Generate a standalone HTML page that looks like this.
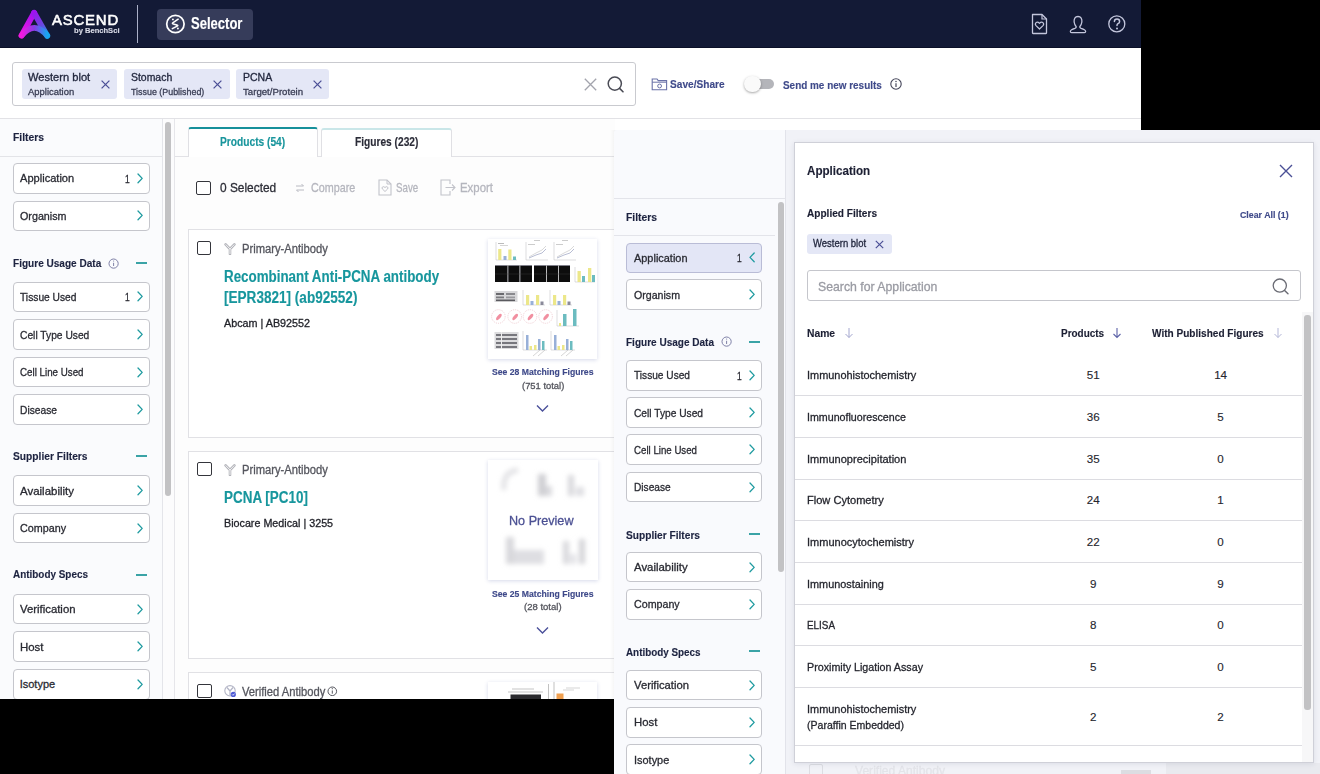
<!DOCTYPE html>
<html><head><meta charset="utf-8"><style>
html,body{margin:0;padding:0;}
body{width:1320px;height:774px;overflow:hidden;position:relative;background:#fff;font-family:"Liberation Sans", sans-serif;}
div,svg{box-sizing:border-box;}
</style></head><body>
<div style="position:absolute;left:0px;top:0px;width:1141px;height:48px;background:#131a36;border-bottom:1.5px solid #0b1028;"></div>
<svg style="position:absolute;left:14px;top:5px;" width="40" height="38" viewBox="0 0 40 38"><defs>
<linearGradient id="lgL" gradientUnits="userSpaceOnUse" x1="20" y1="7" x2="7.5" y2="31"><stop offset="0" stop-color="#a010f0"/><stop offset="1" stop-color="#f218e0"/></linearGradient>
<linearGradient id="lgR" gradientUnits="userSpaceOnUse" x1="20" y1="7" x2="33" y2="31"><stop offset="0" stop-color="#a012f0"/><stop offset="0.55" stop-color="#6a48e0"/><stop offset="1" stop-color="#16a6f0"/></linearGradient>
<linearGradient id="lgA" gradientUnits="userSpaceOnUse" x1="7.5" y1="0" x2="33" y2="0"><stop offset="0" stop-color="#f218e0"/><stop offset="0.5" stop-color="#8a3ce6"/><stop offset="1" stop-color="#16a6f0"/></linearGradient></defs>
<path d="M7.6 30.5 L20.1 7.8" fill="none" stroke="url(#lgL)" stroke-width="5.8" stroke-linecap="round"/>
<path d="M20.1 7.8 L33.2 30.7" fill="none" stroke="url(#lgR)" stroke-width="5.8" stroke-linecap="round"/>
<path d="M7.6 30.5 Q20.3 15.2 33.2 30.7" fill="none" stroke="url(#lgA)" stroke-width="5.8" stroke-linecap="round"/></svg>
<div class="t" style="position:absolute;left:52px;top:13.27px;font-size:14.8px;font-weight:400;color:#ffffff;line-height:14.8px;-webkit-text-stroke:0.3px currentColor;white-space:nowrap;transform:scaleX(1.0080);transform-origin:0 0;letter-spacing:0.8px;-webkit-text-stroke:0.55px #fff;">ASCEND</div>
<div class="t" style="position:absolute;left:73.5px;top:27.45px;font-size:7.5px;font-weight:700;color:#d8dae6;line-height:7.5px;-webkit-text-stroke:0.15px currentColor;white-space:nowrap;transform:scaleX(1.0108);transform-origin:0 0;">by BenchSci</div>
<div style="position:absolute;left:137px;top:5px;width:1.3px;height:38px;background:#aab0c8;"></div>
<div style="position:absolute;left:157px;top:8.5px;width:96px;height:31px;background:#363c5a;border-radius:4px;"></div>
<svg style="position:absolute;left:165px;top:14px;" width="21" height="20" viewBox="0 0 21 20"><circle cx="10.4" cy="9.95" r="8.7" fill="none" stroke="#fff" stroke-width="1.75"/><path d="M13.2 5.2 L8.1 8.6 Q6.6 9.6 8.3 10.0 L11.9 10.9 Q13.6 11.3 12.2 12.1 L7.3 14.6" fill="none" stroke="#fff" stroke-width="1.5" stroke-linecap="round" stroke-linejoin="round"/><circle cx="7.9" cy="5.4" r="0.95" fill="#fff"/><circle cx="12.9" cy="14.5" r="0.95" fill="#fff"/></svg>
<div class="t" style="position:absolute;left:191px;top:16.16px;font-size:16px;font-weight:700;color:#ffffff;line-height:16px;-webkit-text-stroke:0.15px currentColor;white-space:nowrap;transform:scaleX(0.8141);transform-origin:0 0;">Selector</div>
<svg style="position:absolute;left:1030px;top:13px;" width="19" height="22" viewBox="0 0 19 22"><path d="M2.5 1.5 H12 L16.5 6 V20 Q16.5 20.5 16 20.5 H3 Q2.5 20.5 2.5 20 Z" fill="none" stroke="#c3c6dc" stroke-width="1.3" stroke-linejoin="round"/><path d="M12 1.5 V6 H16.5" fill="none" stroke="#c3c6dc" stroke-width="1.2"/><path d="M9.5 16 L6 12.6 Q4.6 11 6.1 9.6 Q7.7 8.4 9.5 10.3 Q11.3 8.4 12.9 9.6 Q14.4 11 13 12.6 Z" fill="none" stroke="#c3c6dc" stroke-width="1.2" stroke-linejoin="round"/></svg>
<svg style="position:absolute;left:1067px;top:13px;" width="22" height="22" viewBox="0 0 22 22"><g transform="translate(11 11.6) scale(0.88) translate(-11 -11.2)"><path d="M11 2 C7.5 2 6.3 5 6.6 8.3 C6.9 11 8.3 12.8 9 13.6 C9.2 14.6 8.6 15.2 7.5 15.6 C4.5 16.6 2.3 17.5 2.3 19 Q2.3 20.3 3.8 20.3 H18.2 Q19.7 20.3 19.7 19 C19.7 17.5 17.5 16.6 14.5 15.6 C13.4 15.2 12.8 14.6 13 13.6 C13.7 12.8 15.1 11 15.4 8.3 C15.7 5 14.5 2 11 2 Z" fill="none" stroke="#c3c6dc" stroke-width="1.45" stroke-linejoin="round"/></g></svg>
<svg style="position:absolute;left:1106px;top:13px;" width="22" height="22" viewBox="0 0 22 22"><circle cx="10.8" cy="10.9" r="8" fill="none" stroke="#c3c6dc" stroke-width="1.3"/><path d="M8.4 8.6 Q8.4 6 11 6 Q13.6 6 13.6 8.4 Q13.6 9.8 12 10.7 Q11 11.3 11 12.6" fill="none" stroke="#c3c6dc" stroke-width="1.5" stroke-linecap="round"/><circle cx="11" cy="15.4" r="1" fill="#c3c6dc"/></svg>
<div style="position:absolute;left:1141px;top:0px;width:179px;height:130px;background:#000;"></div>
<div style="position:absolute;left:12px;top:61.5px;width:624px;height:44px;border:1px solid #c9cacf;border-radius:3px;background:#fff;"></div>
<div style="position:absolute;left:22px;top:68.7px;width:95px;height:30px;background:#e4e7f6;border-radius:3px;"></div>
<div class="t" style="position:absolute;left:28.3px;top:72.13px;font-size:10.6px;font-weight:400;color:#23283f;line-height:10.6px;-webkit-text-stroke:0.3px currentColor;white-space:nowrap;transform:scaleX(1.0492);transform-origin:0 0;">Western blot</div>
<div class="t" style="position:absolute;left:28.3px;top:86.84px;font-size:9.4px;font-weight:400;color:#3a3e55;line-height:9.4px;-webkit-text-stroke:0.3px currentColor;white-space:nowrap;transform:scaleX(1.0071);transform-origin:0 0;">Application</div>
<svg style="position:absolute;left:100.5px;top:80px;" width="9" height="9" viewBox="0 0 9 9"><path d="M0.6 0.6 L8.4 8.4 M8.4 0.6 L0.6 8.4" stroke="#4a4e96" stroke-width="1.25"/></svg>
<div style="position:absolute;left:124.2px;top:68.7px;width:105.5px;height:30px;background:#e4e7f6;border-radius:3px;"></div>
<div class="t" style="position:absolute;left:130.5px;top:72.13px;font-size:10.6px;font-weight:400;color:#23283f;line-height:10.6px;-webkit-text-stroke:0.3px currentColor;white-space:nowrap;transform:scaleX(0.9854);transform-origin:0 0;">Stomach</div>
<div class="t" style="position:absolute;left:130.5px;top:86.84px;font-size:9.4px;font-weight:400;color:#3a3e55;line-height:9.4px;-webkit-text-stroke:0.3px currentColor;white-space:nowrap;transform:scaleX(0.9483);transform-origin:0 0;">Tissue (Published)</div>
<svg style="position:absolute;left:212.5px;top:80px;" width="9" height="9" viewBox="0 0 9 9"><path d="M0.6 0.6 L8.4 8.4 M8.4 0.6 L0.6 8.4" stroke="#4a4e96" stroke-width="1.25"/></svg>
<div style="position:absolute;left:236.3px;top:68.7px;width:93px;height:30px;background:#e4e7f6;border-radius:3px;"></div>
<div class="t" style="position:absolute;left:242.60000000000002px;top:72.13px;font-size:10.6px;font-weight:400;color:#23283f;line-height:10.6px;-webkit-text-stroke:0.3px currentColor;white-space:nowrap;transform:scaleX(0.9919);transform-origin:0 0;">PCNA</div>
<div class="t" style="position:absolute;left:242.60000000000002px;top:86.84px;font-size:9.4px;font-weight:400;color:#3a3e55;line-height:9.4px;-webkit-text-stroke:0.3px currentColor;white-space:nowrap;transform:scaleX(1.0278);transform-origin:0 0;">Target/Protein</div>
<svg style="position:absolute;left:312.5px;top:80px;" width="9" height="9" viewBox="0 0 9 9"><path d="M0.6 0.6 L8.4 8.4 M8.4 0.6 L0.6 8.4" stroke="#4a4e96" stroke-width="1.25"/></svg>
<svg style="position:absolute;left:584px;top:77.5px;" width="13" height="13" viewBox="0 0 13 13"><path d="M0.8 0.8 L12.2 12.2 M12.2 0.8 L0.8 12.2" stroke="#a3a4ad" stroke-width="1.3"/></svg>
<svg style="position:absolute;left:607px;top:76px;" width="18" height="17" viewBox="0 0 18 17"><circle cx="7.8" cy="7.6" r="6.6" fill="none" stroke="#4a4b55" stroke-width="1.5"/><path d="M12.6 12.4 L16 15.8" stroke="#4a4b55" stroke-width="1.6" stroke-linecap="round"/></svg>
<svg style="position:absolute;left:651px;top:77px;" width="17" height="14" viewBox="0 0 17 14"><path d="M1.2 2 H6 L7.2 3.6 H15.6 V12.8 H1.2 Z" fill="none" stroke="#6a72a8" stroke-width="1.1"/><path d="M1.2 5.2 H15.6" stroke="#6a72a8" stroke-width="1"/><circle cx="8.6" cy="9" r="1.9" fill="none" stroke="#6a72a8" stroke-width="1"/></svg>
<div class="t" style="position:absolute;left:670.4px;top:78.48px;font-size:11.6px;font-weight:700;color:#3f4a8a;line-height:11.6px;-webkit-text-stroke:0.15px currentColor;white-space:nowrap;transform:scaleX(0.8732);transform-origin:0 0;">Save/Share</div>
<div style="position:absolute;left:747px;top:78.8px;width:27px;height:10.5px;background:#b4b5ba;border-radius:6px;"></div>
<div style="position:absolute;left:744px;top:75.8px;width:16.5px;height:16.5px;background:#fafafa;border-radius:50%;box-shadow:0 1px 2.5px rgba(0,0,0,0.35);"></div>
<div class="t" style="position:absolute;left:783px;top:78.68px;font-size:11.6px;font-weight:700;color:#3f4a8a;line-height:11.6px;-webkit-text-stroke:0.15px currentColor;white-space:nowrap;transform:scaleX(0.8566);transform-origin:0 0;">Send me new results</div>
<svg style="position:absolute;left:890px;top:78px;" width="12" height="12" viewBox="0 0 12 12"><circle cx="6" cy="6" r="5.2" fill="none" stroke="#45465a" stroke-width="1.1"/><path d="M6 5.2 V9" stroke="#45465a" stroke-width="1.2"/><circle cx="6" cy="3.4" r="0.75" fill="#45465a"/></svg>
<div style="position:absolute;left:0px;top:118px;width:1141px;height:1.2px;background:#e2e2e6;"></div>
<div style="position:absolute;left:0px;top:119px;width:162.5px;height:580px;background:#fafbfd;border-right:1px solid #e4e5ea;"></div>
<div style="position:absolute;left:162.5px;top:119px;width:11.5px;height:580px;background:#fcfcfd;"></div>
<div style="position:absolute;left:165px;top:121.5px;width:6.2px;height:374px;background:#c2c2c4;border-radius:3px;"></div>
<div style="position:absolute;left:173.5px;top:119px;width:1px;height:580px;background:#e6e6ea;"></div>
<div style="position:absolute;left:0px;top:155.6px;width:162px;height:1.2px;background:#e3e4e8;"></div>
<div class="t" style="position:absolute;left:12.6px;top:132.12px;font-size:11.2px;font-weight:700;color:#1d2340;line-height:11.2px;-webkit-text-stroke:0.15px currentColor;white-space:nowrap;transform:scaleX(0.9232);transform-origin:0 0;">Filters</div>
<div style="position:absolute;left:12.5px;top:163px;width:137px;height:30.6px;background:#ffffff;border:1px solid #c5c6cc;border-radius:4px;"></div>
<div class="t" style="position:absolute;left:19.7px;top:173.49px;font-size:11px;font-weight:400;color:#2a2b33;line-height:11px;-webkit-text-stroke:0.3px currentColor;white-space:nowrap;transform:scaleX(1.0069);transform-origin:0 0;">Application</div>
<div class="t" style="position:absolute;left:125.0px;top:173.89px;font-size:11px;font-weight:400;color:#2a2b33;line-height:11px;-webkit-text-stroke:0.3px currentColor;white-space:nowrap;transform:scaleX(0.7673);transform-origin:0 0;">1</div>
<svg style="position:absolute;left:136.70000000000002px;top:172.8px;" width="7" height="11" viewBox="0 0 7 11"><path d="M1 1 L5.2 5.4 L1 9.8" fill="none" stroke="#1f9ba0" stroke-width="1.3" stroke-linecap="round" stroke-linejoin="round"/></svg>
<div style="position:absolute;left:12.5px;top:200.6px;width:137px;height:30.6px;background:#ffffff;border:1px solid #c5c6cc;border-radius:4px;"></div>
<div class="t" style="position:absolute;left:19.7px;top:211.09px;font-size:11px;font-weight:400;color:#2a2b33;line-height:11px;-webkit-text-stroke:0.3px currentColor;white-space:nowrap;transform:scaleX(0.9751);transform-origin:0 0;">Organism</div>
<svg style="position:absolute;left:136.70000000000002px;top:210.4px;" width="7" height="11" viewBox="0 0 7 11"><path d="M1 1 L5.2 5.4 L1 9.8" fill="none" stroke="#1f9ba0" stroke-width="1.3" stroke-linecap="round" stroke-linejoin="round"/></svg>
<div class="t" style="position:absolute;left:12.7px;top:257.61px;font-size:11.8px;font-weight:700;color:#1d2340;line-height:11.8px;-webkit-text-stroke:0.15px currentColor;white-space:nowrap;transform:scaleX(0.8524);transform-origin:0 0;">Figure Usage Data</div>
<svg style="position:absolute;left:108.2px;top:257.5px;" width="11.2" height="11.2" viewBox="0 0 11.2 11.2"><circle cx="5.6" cy="5.6" r="4.6" fill="none" stroke="#7d80a6" stroke-width="1"/><path d="M5.6 4.8 V8.0" stroke="#7d80a6" stroke-width="1"/><circle cx="5.6" cy="2.9999999999999996" r="0.6" fill="#7d80a6"/></svg>
<div style="position:absolute;left:136.4px;top:262px;width:11px;height:1.6px;background:#3aa3a6;"></div>
<div style="position:absolute;left:12.5px;top:281.6px;width:137px;height:30.6px;background:#ffffff;border:1px solid #c5c6cc;border-radius:4px;"></div>
<div class="t" style="position:absolute;left:19.7px;top:292.09px;font-size:11px;font-weight:400;color:#2a2b33;line-height:11px;-webkit-text-stroke:0.3px currentColor;white-space:nowrap;transform:scaleX(0.9303);transform-origin:0 0;">Tissue Used</div>
<div class="t" style="position:absolute;left:125.0px;top:292.49px;font-size:11px;font-weight:400;color:#2a2b33;line-height:11px;-webkit-text-stroke:0.3px currentColor;white-space:nowrap;transform:scaleX(0.7673);transform-origin:0 0;">1</div>
<svg style="position:absolute;left:136.70000000000002px;top:291.40000000000003px;" width="7" height="11" viewBox="0 0 7 11"><path d="M1 1 L5.2 5.4 L1 9.8" fill="none" stroke="#1f9ba0" stroke-width="1.3" stroke-linecap="round" stroke-linejoin="round"/></svg>
<div style="position:absolute;left:12.5px;top:319.2px;width:137px;height:30.6px;background:#ffffff;border:1px solid #c5c6cc;border-radius:4px;"></div>
<div class="t" style="position:absolute;left:19.7px;top:329.69px;font-size:11px;font-weight:400;color:#2a2b33;line-height:11px;-webkit-text-stroke:0.3px currentColor;white-space:nowrap;transform:scaleX(0.9316);transform-origin:0 0;">Cell Type Used</div>
<svg style="position:absolute;left:136.70000000000002px;top:329.0px;" width="7" height="11" viewBox="0 0 7 11"><path d="M1 1 L5.2 5.4 L1 9.8" fill="none" stroke="#1f9ba0" stroke-width="1.3" stroke-linecap="round" stroke-linejoin="round"/></svg>
<div style="position:absolute;left:12.5px;top:356.8px;width:137px;height:30.6px;background:#ffffff;border:1px solid #c5c6cc;border-radius:4px;"></div>
<div class="t" style="position:absolute;left:19.7px;top:367.29px;font-size:11px;font-weight:400;color:#2a2b33;line-height:11px;-webkit-text-stroke:0.3px currentColor;white-space:nowrap;transform:scaleX(0.8875);transform-origin:0 0;">Cell Line Used</div>
<svg style="position:absolute;left:136.70000000000002px;top:366.6px;" width="7" height="11" viewBox="0 0 7 11"><path d="M1 1 L5.2 5.4 L1 9.8" fill="none" stroke="#1f9ba0" stroke-width="1.3" stroke-linecap="round" stroke-linejoin="round"/></svg>
<div style="position:absolute;left:12.5px;top:394.4px;width:137px;height:30.6px;background:#ffffff;border:1px solid #c5c6cc;border-radius:4px;"></div>
<div class="t" style="position:absolute;left:19.7px;top:404.89px;font-size:11px;font-weight:400;color:#2a2b33;line-height:11px;-webkit-text-stroke:0.3px currentColor;white-space:nowrap;transform:scaleX(0.9308);transform-origin:0 0;">Disease</div>
<svg style="position:absolute;left:136.70000000000002px;top:404.2px;" width="7" height="11" viewBox="0 0 7 11"><path d="M1 1 L5.2 5.4 L1 9.8" fill="none" stroke="#1f9ba0" stroke-width="1.3" stroke-linecap="round" stroke-linejoin="round"/></svg>
<div class="t" style="position:absolute;left:12.7px;top:450.81px;font-size:11.8px;font-weight:700;color:#1d2340;line-height:11.8px;-webkit-text-stroke:0.15px currentColor;white-space:nowrap;transform:scaleX(0.8675);transform-origin:0 0;">Supplier Filters</div>
<div style="position:absolute;left:136.4px;top:455px;width:11px;height:1.6px;background:#3aa3a6;"></div>
<div style="position:absolute;left:12.5px;top:475.3px;width:137px;height:30.6px;background:#ffffff;border:1px solid #c5c6cc;border-radius:4px;"></div>
<div class="t" style="position:absolute;left:19.7px;top:485.79px;font-size:11px;font-weight:400;color:#2a2b33;line-height:11px;-webkit-text-stroke:0.3px currentColor;white-space:nowrap;transform:scaleX(1.0428);transform-origin:0 0;">Availability</div>
<svg style="position:absolute;left:136.70000000000002px;top:485.1px;" width="7" height="11" viewBox="0 0 7 11"><path d="M1 1 L5.2 5.4 L1 9.8" fill="none" stroke="#1f9ba0" stroke-width="1.3" stroke-linecap="round" stroke-linejoin="round"/></svg>
<div style="position:absolute;left:12.5px;top:512.9px;width:137px;height:30.6px;background:#ffffff;border:1px solid #c5c6cc;border-radius:4px;"></div>
<div class="t" style="position:absolute;left:19.7px;top:523.39px;font-size:11px;font-weight:400;color:#2a2b33;line-height:11px;-webkit-text-stroke:0.3px currentColor;white-space:nowrap;transform:scaleX(0.9771);transform-origin:0 0;">Company</div>
<svg style="position:absolute;left:136.70000000000002px;top:522.6999999999999px;" width="7" height="11" viewBox="0 0 7 11"><path d="M1 1 L5.2 5.4 L1 9.8" fill="none" stroke="#1f9ba0" stroke-width="1.3" stroke-linecap="round" stroke-linejoin="round"/></svg>
<div class="t" style="position:absolute;left:12.7px;top:569.41px;font-size:11.8px;font-weight:700;color:#1d2340;line-height:11.8px;-webkit-text-stroke:0.15px currentColor;white-space:nowrap;transform:scaleX(0.8412);transform-origin:0 0;">Antibody Specs</div>
<div style="position:absolute;left:136.4px;top:574px;width:11px;height:1.6px;background:#3aa3a6;"></div>
<div style="position:absolute;left:12.5px;top:593.8px;width:137px;height:30.6px;background:#ffffff;border:1px solid #c5c6cc;border-radius:4px;"></div>
<div class="t" style="position:absolute;left:19.7px;top:604.29px;font-size:11px;font-weight:400;color:#2a2b33;line-height:11px;-webkit-text-stroke:0.3px currentColor;white-space:nowrap;transform:scaleX(1.0314);transform-origin:0 0;">Verification</div>
<svg style="position:absolute;left:136.70000000000002px;top:603.5999999999999px;" width="7" height="11" viewBox="0 0 7 11"><path d="M1 1 L5.2 5.4 L1 9.8" fill="none" stroke="#1f9ba0" stroke-width="1.3" stroke-linecap="round" stroke-linejoin="round"/></svg>
<div style="position:absolute;left:12.5px;top:631.4px;width:137px;height:30.6px;background:#ffffff;border:1px solid #c5c6cc;border-radius:4px;"></div>
<div class="t" style="position:absolute;left:19.7px;top:641.89px;font-size:11px;font-weight:400;color:#2a2b33;line-height:11px;-webkit-text-stroke:0.3px currentColor;white-space:nowrap;transform:scaleX(1.0387);transform-origin:0 0;">Host</div>
<svg style="position:absolute;left:136.70000000000002px;top:641.1999999999999px;" width="7" height="11" viewBox="0 0 7 11"><path d="M1 1 L5.2 5.4 L1 9.8" fill="none" stroke="#1f9ba0" stroke-width="1.3" stroke-linecap="round" stroke-linejoin="round"/></svg>
<div style="position:absolute;left:12.5px;top:669px;width:137px;height:30.6px;background:#ffffff;border:1px solid #c5c6cc;border-radius:4px;"></div>
<div class="t" style="position:absolute;left:19.7px;top:679.49px;font-size:11px;font-weight:400;color:#2a2b33;line-height:11px;-webkit-text-stroke:0.3px currentColor;white-space:nowrap;transform-origin:0 0;">Isotype</div>
<svg style="position:absolute;left:136.70000000000002px;top:678.8px;" width="7" height="11" viewBox="0 0 7 11"><path d="M1 1 L5.2 5.4 L1 9.8" fill="none" stroke="#1f9ba0" stroke-width="1.3" stroke-linecap="round" stroke-linejoin="round"/></svg>
<div style="position:absolute;left:174.5px;top:119px;width:440px;height:580px;background:#fdfdfd;"></div>
<div style="position:absolute;left:174.5px;top:156px;width:440px;height:1.2px;background:#e2e2e6;"></div>
<div style="position:absolute;left:187.5px;top:127px;width:130px;height:30.2px;background:#fff;border:1px solid #e0e0e4;border-bottom:none;border-top:2.6px solid #16909a;border-radius:3px 3px 0 0;"></div>
<div style="position:absolute;left:321.2px;top:127.5px;width:130.5px;height:29px;background:#fff;border:1px solid #e0e0e4;border-bottom:none;border-top:2px solid #c9e6e8;border-radius:3px 3px 0 0;"></div>
<div class="t" style="position:absolute;left:219.8px;top:136.13px;font-size:12.6px;font-weight:700;color:#19959c;line-height:12.6px;-webkit-text-stroke:0.15px currentColor;white-space:nowrap;transform:scaleX(0.8101);transform-origin:0 0;">Products (54)</div>
<div class="t" style="position:absolute;left:355px;top:136.13px;font-size:12.6px;font-weight:700;color:#2b2c38;line-height:12.6px;-webkit-text-stroke:0.15px currentColor;white-space:nowrap;transform:scaleX(0.8088);transform-origin:0 0;font-weight:600;">Figures (232)</div>
<div style="position:absolute;left:196.4px;top:181px;width:14.2px;height:14px;border:1.8px solid #34353b;border-radius:2px;background:#fff;"></div>
<div class="t" style="position:absolute;left:219.8px;top:181.36px;font-size:13.4px;font-weight:400;color:#2c2d36;line-height:13.4px;-webkit-text-stroke:0.3px currentColor;white-space:nowrap;transform:scaleX(0.8881);transform-origin:0 0;">0 Selected</div>
<svg style="position:absolute;left:294.5px;top:182.5px;" width="10" height="10" viewBox="0 0 10 10"><path d="M1 3 H8.5 M6.5 1 L8.5 3 M9 7 H1.5 M3.5 9 L1.5 7" fill="none" stroke="#b9bac2" stroke-width="1"/></svg>
<div class="t" style="position:absolute;left:310.7px;top:181.73px;font-size:12.6px;font-weight:400;color:#b5b6be;line-height:12.6px;-webkit-text-stroke:0.3px currentColor;white-space:nowrap;transform:scaleX(0.8553);transform-origin:0 0;">Compare</div>
<svg style="position:absolute;left:378px;top:179px;" width="14" height="17" viewBox="0 0 14 17"><path d="M1 1 H9 L13 5 V16 H1 Z" fill="none" stroke="#c2c3ca" stroke-width="1.1"/><path d="M9 1 V5 H13" fill="none" stroke="#c2c3ca" stroke-width="1"/><path d="M7 12.5 L4.4 10 Q3.5 8.8 4.6 7.9 Q5.8 7.2 7 8.5 Q8.2 7.2 9.4 7.9 Q10.5 8.8 9.6 10 Z" fill="none" stroke="#c2c3ca" stroke-width="1"/></svg>
<div class="t" style="position:absolute;left:396.4px;top:181.73px;font-size:12.6px;font-weight:400;color:#b5b6be;line-height:12.6px;-webkit-text-stroke:0.3px currentColor;white-space:nowrap;transform:scaleX(0.7730);transform-origin:0 0;">Save</div>
<svg style="position:absolute;left:440px;top:179px;" width="16" height="17" viewBox="0 0 16 17"><path d="M10 5 V1 H1 V16 H10 V12" fill="none" stroke="#c2c3ca" stroke-width="1.1"/><path d="M5.5 8.5 H15 M12 5.5 L15 8.5 L12 11.5" fill="none" stroke="#c2c3ca" stroke-width="1.1"/></svg>
<div class="t" style="position:absolute;left:459.5px;top:181.73px;font-size:12.6px;font-weight:400;color:#b5b6be;line-height:12.6px;-webkit-text-stroke:0.3px currentColor;white-space:nowrap;transform:scaleX(0.9064);transform-origin:0 0;">Export</div>
<div style="position:absolute;left:187.5px;top:228.6px;width:440px;height:209px;background:#fff;border:1px solid #e1e1e5;"></div>
<div style="position:absolute;left:197px;top:240.5px;width:14.2px;height:14px;border:1.8px solid #34353b;border-radius:2px;"></div>
<svg style="position:absolute;left:224px;top:242.5px;" width="12" height="12" viewBox="0 0 12 12"><path d="M6 11 V6 M6 6 L1.6 1.4 M6 6 L10.4 1.4" fill="none" stroke="#b4b5bb" stroke-width="2.6" stroke-linecap="round"/><path d="M6 10.6 V6.2 M5.8 5.8 L1.9 1.7 M6.2 5.8 L10.1 1.7" fill="none" stroke="#fff" stroke-width="0.8" stroke-linecap="round"/></svg>
<div class="t" style="position:absolute;left:241.8px;top:242.59px;font-size:12.3px;font-weight:400;color:#55565e;line-height:12.3px;-webkit-text-stroke:0.3px currentColor;white-space:nowrap;transform:scaleX(0.9108);transform-origin:0 0;">Primary-Antibody</div>
<div class="t" style="position:absolute;left:223.9px;top:268.59px;font-size:15.6px;font-weight:700;color:#17969d;line-height:15.6px;-webkit-text-stroke:0.15px currentColor;white-space:nowrap;transform:scaleX(0.8571);transform-origin:0 0;font-weight:600;">Recombinant Anti-PCNA antibody</div>
<div class="t" style="position:absolute;left:223.9px;top:289.79px;font-size:15.6px;font-weight:700;color:#17969d;line-height:15.6px;-webkit-text-stroke:0.15px currentColor;white-space:nowrap;transform:scaleX(0.8695);transform-origin:0 0;font-weight:600;">[EPR3821] (ab92552)</div>
<div class="t" style="position:absolute;left:223.9px;top:317.72px;font-size:11.2px;font-weight:400;color:#22232a;line-height:11.2px;-webkit-text-stroke:0.3px currentColor;white-space:nowrap;transform:scaleX(0.9635);transform-origin:0 0;">Abcam | AB92552</div>
<div style="position:absolute;left:488px;top:239px;width:109px;height:120px;background:#fff;box-shadow:0 0.5px 4px rgba(70,80,160,0.22);"></div>
<svg style="position:absolute;left:487.4px;top:238.4px;" width="110" height="121" viewBox="0 0 110 121"><defs><filter id="sb" x="-5%" y="-5%" width="110%" height="110%"><feGaussianBlur stdDeviation="0.4"/></filter></defs><g filter="url(#sb)"><path d="M9 4 L9 22" stroke="#b8b8bc" stroke-width="0.5"/><path d="M9 22 L30 22" stroke="#b8b8bc" stroke-width="0.5"/><rect x="11.2" y="11" width="3.2" height="11" fill="#ece78a" opacity="1"/><rect x="16.5" y="18" width="3" height="4" fill="#98b0d8" opacity="1"/><rect x="21.3" y="11.5" width="3.2" height="10.5" fill="#ece78a" opacity="1"/><rect x="26" y="18.5" width="3" height="3.5" fill="#6cbcc0" opacity="1"/><rect x="11" y="5" width="6" height="1" fill="#bbb" opacity="1"/><rect x="13" y="7" width="8" height="0.8" fill="#ccc" opacity="1"/><path d="M39 4 L39 22" stroke="#b8b8bc" stroke-width="0.5"/><path d="M39 22 L61 22" stroke="#b8b8bc" stroke-width="0.5"/><path d="M42 19 L49 15 L55 12 L59 8" stroke="#c8c8c8" stroke-width="0.7" fill="none"/><path d="M42 20 L49 17 L55 15 L59 11" stroke="#9aa0c0" stroke-width="0.7" fill="none"/><rect x="41" y="6" width="7" height="1" fill="#ccc" opacity="1"/><rect x="47" y="2" width="6" height="1" fill="#ccc" opacity="1"/><path d="M67 4 L67 22" stroke="#b8b8bc" stroke-width="0.5"/><path d="M67 22 L89 22" stroke="#b8b8bc" stroke-width="0.5"/><path d="M70 19 L77 15 L83 12 L87 8" stroke="#c8c8c8" stroke-width="0.7" fill="none"/><path d="M70 20 L77 17 L83 15 L87 11" stroke="#9aa0c0" stroke-width="0.7" fill="none"/><rect x="69" y="6" width="7" height="1" fill="#ccc" opacity="1"/><rect x="75" y="2" width="6" height="1" fill="#ccc" opacity="1"/><rect x="8" y="27.5" width="37" height="16.5" fill="#0c0c10" opacity="1"/><rect x="47" y="27.5" width="36" height="16.5" fill="#0c0c10" opacity="1"/><rect x="20.5" y="27.5" width="0.8" height="16.5" fill="#e8e8e8" opacity="1"/><rect x="32.5" y="27.5" width="0.8" height="16.5" fill="#e8e8e8" opacity="1"/><rect x="59" y="27.5" width="0.8" height="16.5" fill="#e8e8e8" opacity="1"/><rect x="71" y="27.5" width="0.8" height="16.5" fill="#e8e8e8" opacity="1"/><path d="M8 36 L45 36" stroke="#444" stroke-width="0.4"/><path d="M47 36 L83 36" stroke="#444" stroke-width="0.4"/><path d="M88 29 L88 44" stroke="#b8b8bc" stroke-width="0.5"/><path d="M88 44 L108 44" stroke="#b8b8bc" stroke-width="0.5"/><rect x="90.5" y="33" width="3.3" height="11" fill="#ece78a" opacity="1"/><rect x="95" y="38" width="3" height="6" fill="#6cbcc0" opacity="1"/><rect x="101" y="30" width="3.3" height="14" fill="#ece78a" opacity="1"/><rect x="105" y="37" width="3" height="7" fill="#6cbcc0" opacity="1"/><rect x="7.5" y="53" width="23" height="11" fill="#d8d8da" opacity="1"/><rect x="9" y="55" width="8" height="2" fill="#6a6a6e" opacity="1"/><rect x="19" y="55" width="9" height="2" fill="#8a8a8e" opacity="1"/><rect x="9" y="58.5" width="8" height="1.8" fill="#7a7a7e" opacity="1"/><rect x="19" y="58.5" width="9" height="1.8" fill="#9a9a9e" opacity="1"/><rect x="9" y="61.5" width="19" height="1.6" fill="#5a5a5e" opacity="1"/><path d="M36 52 L36 67" stroke="#b8b8bc" stroke-width="0.5"/><path d="M36 67 L58 67" stroke="#b8b8bc" stroke-width="0.5"/><rect x="39" y="57" width="3.2" height="10" fill="#ece78a" opacity="1"/><rect x="43.5" y="63" width="3" height="4" fill="#98b0d8" opacity="1"/><rect x="49" y="57" width="3.2" height="10" fill="#ece78a" opacity="1"/><rect x="53.5" y="63.5" width="3" height="3.5" fill="#8a8a9a" opacity="1"/><path d="M63 52 L63 67" stroke="#b8b8bc" stroke-width="0.5"/><path d="M63 67 L85 67" stroke="#b8b8bc" stroke-width="0.5"/><rect x="66" y="57" width="3.2" height="10" fill="#ece78a" opacity="1"/><rect x="70.5" y="63" width="3" height="4" fill="#98b0d8" opacity="1"/><rect x="76" y="57" width="3.2" height="10" fill="#ece78a" opacity="1"/><rect x="80.5" y="63.5" width="3" height="3.5" fill="#8a8a9a" opacity="1"/><circle cx="11.4" cy="78.5" r="6.8" fill="none" stroke="#e6b0b8" stroke-width="0.6" stroke-dasharray="1 1"/><ellipse cx="11.9" cy="79" rx="1.7" ry="3.8" transform="rotate(40 11.9 79)" fill="#ec6a80" opacity="0.75"/><circle cx="27.7" cy="78.5" r="6.8" fill="none" stroke="#e6b0b8" stroke-width="0.6" stroke-dasharray="1 1"/><ellipse cx="28.2" cy="79" rx="1.7" ry="3.8" transform="rotate(40 28.2 79)" fill="#ec6a80" opacity="0.75"/><circle cx="43" cy="78.5" r="6.8" fill="none" stroke="#e6b0b8" stroke-width="0.6" stroke-dasharray="1 1"/><ellipse cx="43.5" cy="79" rx="1.7" ry="3.8" transform="rotate(40 43.5 79)" fill="#ec6a80" opacity="0.75"/><circle cx="58.6" cy="78.5" r="6.8" fill="none" stroke="#e6b0b8" stroke-width="0.6" stroke-dasharray="1 1"/><ellipse cx="59.1" cy="79" rx="1.7" ry="3.8" transform="rotate(40 59.1 79)" fill="#ec6a80" opacity="0.75"/><path d="M70 72 L70 88" stroke="#b8b8bc" stroke-width="0.5"/><path d="M70 88 L92 88" stroke="#b8b8bc" stroke-width="0.5"/><rect x="72" y="85" width="2" height="3" fill="#ece78a" opacity="1"/><rect x="76" y="76" width="3.5" height="12" fill="#6cbcc0" opacity="1"/><rect x="86" y="71" width="3.5" height="17" fill="#6cbcc0" opacity="1"/><rect x="7.5" y="94" width="24" height="17" fill="#dcdcde" opacity="1"/><rect x="9" y="96" width="21" height="2" fill="#77777d" opacity="1"/><rect x="9" y="100" width="21" height="2" fill="#77777d" opacity="1"/><rect x="9" y="104" width="21" height="2" fill="#77777d" opacity="1"/><rect x="9" y="108" width="21" height="2" fill="#77777d" opacity="1"/><rect x="14" y="94" width="1" height="17" fill="#eee" opacity="1"/><path d="M36 93 L36 112" stroke="#b8b8bc" stroke-width="0.5"/><path d="M36 112 L60 112" stroke="#b8b8bc" stroke-width="0.5"/><rect x="39" y="97" width="2.5" height="15" fill="#98b0d8" opacity="1"/><rect x="42.5" y="108" width="2.5" height="4" fill="#ece78a" opacity="1"/><rect x="47" y="107" width="2.5" height="5" fill="#ece78a" opacity="1"/><rect x="51" y="101" width="2.5" height="11" fill="#98b0d8" opacity="1"/><rect x="55" y="103" width="2.5" height="9" fill="#6cbcc0" opacity="1"/><path d="M46 118 L53 112 M51 118 L58 112" stroke="#aaa" stroke-width="0.5"/><path d="M64 93 L64 112" stroke="#b8b8bc" stroke-width="0.5"/><path d="M64 112 L88 112" stroke="#b8b8bc" stroke-width="0.5"/><rect x="67" y="97" width="2.5" height="15" fill="#98b0d8" opacity="1"/><rect x="70.5" y="108" width="2.5" height="4" fill="#ece78a" opacity="1"/><rect x="75" y="107" width="2.5" height="5" fill="#ece78a" opacity="1"/><rect x="79" y="101" width="2.5" height="11" fill="#98b0d8" opacity="1"/><rect x="83" y="103" width="2.5" height="9" fill="#6cbcc0" opacity="1"/><path d="M74 118 L81 112 M79 118 L86 112" stroke="#aaa" stroke-width="0.5"/></g></svg>
<div class="t" style="position:absolute;left:492px;top:367.29px;font-size:9.7px;font-weight:700;color:#3f4a8a;line-height:9.7px;-webkit-text-stroke:0.15px currentColor;white-space:nowrap;transform:scaleX(0.8935);transform-origin:0 0;">See 28 Matching Figures</div>
<div class="t" style="position:absolute;left:521.7px;top:380.59px;font-size:9.7px;font-weight:400;color:#55565e;line-height:9.7px;-webkit-text-stroke:0.3px currentColor;white-space:nowrap;transform:scaleX(0.9696);transform-origin:0 0;">(751 total)</div>
<svg style="position:absolute;left:536px;top:404px;" width="13" height="9" viewBox="0 0 13 9"><path d="M1 1.5 L6.5 7 L12 1.5" fill="none" stroke="#4a509a" stroke-width="1.4"/></svg>
<div style="position:absolute;left:187.5px;top:450.5px;width:440px;height:208px;background:#fff;border:1px solid #e1e1e5;"></div>
<div style="position:absolute;left:197.4px;top:462px;width:14.2px;height:14px;border:1.8px solid #34353b;border-radius:2px;"></div>
<svg style="position:absolute;left:224px;top:464px;" width="12" height="12" viewBox="0 0 12 12"><path d="M6 11 V6 M6 6 L1.6 1.4 M6 6 L10.4 1.4" fill="none" stroke="#b4b5bb" stroke-width="2.6" stroke-linecap="round"/><path d="M6 10.6 V6.2 M5.8 5.8 L1.9 1.7 M6.2 5.8 L10.1 1.7" fill="none" stroke="#fff" stroke-width="0.8" stroke-linecap="round"/></svg>
<div class="t" style="position:absolute;left:241.6px;top:464.09px;font-size:12.3px;font-weight:400;color:#55565e;line-height:12.3px;-webkit-text-stroke:0.3px currentColor;white-space:nowrap;transform:scaleX(0.9108);transform-origin:0 0;">Primary-Antibody</div>
<div class="t" style="position:absolute;left:223.7px;top:489.99px;font-size:15.6px;font-weight:700;color:#17969d;line-height:15.6px;-webkit-text-stroke:0.15px currentColor;white-space:nowrap;transform:scaleX(0.8619);transform-origin:0 0;font-weight:600;">PCNA [PC10]</div>
<div class="t" style="position:absolute;left:223.7px;top:517.82px;font-size:11.2px;font-weight:400;color:#22232a;line-height:11.2px;-webkit-text-stroke:0.3px currentColor;white-space:nowrap;transform:scaleX(0.9603);transform-origin:0 0;">Biocare Medical | 3255</div>
<div style="position:absolute;left:487.5px;top:460.2px;width:110px;height:120.2px;background:#fff;box-shadow:0 0.5px 4px rgba(70,80,160,0.22);"></div>
<svg style="position:absolute;left:487.5px;top:460.2px;" width="110" height="120" viewBox="0 0 110 120"><defs><filter id="bl" x="-50%" y="-50%" width="200%" height="200%"><feGaussianBlur stdDeviation="2.8"/></filter></defs>
<g filter="url(#bl)">
<path d="M16 30 Q14 12 30 10" stroke="#e2e2e5" stroke-width="5" fill="none"/>
<rect x="50" y="14" width="8" height="22" fill="#cfcfd3"/><rect x="58" y="26" width="6" height="10" fill="#dadade"/>
<rect x="80" y="15" width="6" height="21" fill="#d8d8dc"/><rect x="88" y="27" width="8" height="9" fill="#dedee2"/>
<rect x="18" y="77" width="8" height="27" fill="#d8d8dc"/><rect x="26" y="90" width="30" height="14" fill="#dedee2"/>
<rect x="75" y="81" width="6" height="23" fill="#d8d8dc"/><rect x="91" y="79" width="6" height="25" fill="#d4d4d8"/><rect x="82" y="94" width="6" height="10" fill="#e2e2e6"/>
</g></svg>
<div class="t" style="position:absolute;left:508.5px;top:514.19px;font-size:13.6px;font-weight:400;color:#4b5093;line-height:13.6px;-webkit-text-stroke:0.3px currentColor;white-space:nowrap;transform:scaleX(0.9278);transform-origin:0 0;">No Preview</div>
<div class="t" style="position:absolute;left:491.7px;top:588.99px;font-size:9.7px;font-weight:700;color:#3f4a8a;line-height:9.7px;-webkit-text-stroke:0.15px currentColor;white-space:nowrap;transform:scaleX(0.8935);transform-origin:0 0;">See 25 Matching Figures</div>
<div class="t" style="position:absolute;left:523.9px;top:602.39px;font-size:9.7px;font-weight:400;color:#55565e;line-height:9.7px;-webkit-text-stroke:0.3px currentColor;white-space:nowrap;transform:scaleX(0.9834);transform-origin:0 0;">(28 total)</div>
<svg style="position:absolute;left:536px;top:625.5px;" width="13" height="9" viewBox="0 0 13 9"><path d="M1 1.5 L6.5 7 L12 1.5" fill="none" stroke="#4a509a" stroke-width="1.4"/></svg>
<div style="position:absolute;left:187.5px;top:671.8px;width:440px;height:100px;background:#fff;border:1px solid #e1e1e5;"></div>
<div style="position:absolute;left:197.4px;top:683.5px;width:14.2px;height:14px;border:1.8px solid #34353b;border-radius:2px;"></div>
<svg style="position:absolute;left:223.5px;top:685px;" width="13" height="13" viewBox="0 0 13 13"><circle cx="6" cy="5.8" r="5.2" fill="none" stroke="#b3b5c6" stroke-width="1.1"/><path d="M6 10.5 V6 M6 6 L3 2.5 M6 6 L9 2.5" fill="none" stroke="#b3b5c6" stroke-width="1.2"/><circle cx="9.3" cy="9.4" r="2.6" fill="#4f5bd5"/><path d="M8.1 9.4 L9 10.3 L10.6 8.6" fill="none" stroke="#fff" stroke-width="0.8"/></svg>
<div class="t" style="position:absolute;left:241.9px;top:685.79px;font-size:12.3px;font-weight:400;color:#55565e;line-height:12.3px;-webkit-text-stroke:0.3px currentColor;white-space:nowrap;transform:scaleX(0.9093);transform-origin:0 0;">Verified Antibody</div>
<svg style="position:absolute;left:327.09999999999997px;top:685.7px;" width="10.6" height="10.6" viewBox="0 0 10.6 10.6"><circle cx="5.3" cy="5.3" r="4.3" fill="none" stroke="#55565e" stroke-width="1"/><path d="M5.3 4.5 V7.699999999999999" stroke="#55565e" stroke-width="1"/><circle cx="5.3" cy="2.6999999999999997" r="0.6" fill="#55565e"/></svg>
<div style="position:absolute;left:488.2px;top:682px;width:108.6px;height:40px;background:#fff;box-shadow:0 0.5px 4px rgba(70,80,160,0.22);"></div>
<svg style="position:absolute;left:488.2px;top:682px;" width="109" height="17" viewBox="0 0 109 17"><rect x="22.5" y="12.5" width="30.5" height="6" fill="#2a2a2e"/><path d="M20 10 H55 M24 7 H46" stroke="#888" stroke-width="0.5"/><rect x="68.5" y="11.5" width="7" height="6" fill="#f0a050"/><path d="M60.5 2 V17 M66 0 V17" stroke="#999" stroke-width="0.6"/><path d="M78 6 H92 M75 8 H86" stroke="#aaa" stroke-width="0.5"/></svg>
<div style="position:absolute;left:0px;top:699px;width:614px;height:75px;background:#000;"></div>
<div style="position:absolute;left:610px;top:130px;width:6px;height:644px;background:linear-gradient(to right,rgba(0,0,0,0),rgba(0,0,0,0.05));"></div>
<div style="position:absolute;left:614px;top:130px;width:706px;height:644px;background:#f1f2f7;border-top-left-radius:3px;"></div>
<div style="position:absolute;left:1166px;top:763px;width:154px;height:11px;background:#e9eaef;"></div>
<div style="position:absolute;left:809.4px;top:764px;width:13.3px;height:12px;border:1.2px solid #dcdde2;border-radius:2px;"></div>
<div class="t" style="position:absolute;left:855.4px;top:764.59px;font-size:12.3px;font-weight:400;color:#e3e4e9;line-height:12.3px;-webkit-text-stroke:0.3px currentColor;white-space:nowrap;transform:scaleX(0.9824);transform-origin:0 0;">Verified Antibody</div>
<div style="position:absolute;left:1120.6px;top:769.5px;width:30.5px;height:5px;background:#dcdde2;"></div>
<div style="position:absolute;left:614px;top:130px;width:172px;height:644px;background:#f9fafd;border-right:1px solid #e2e3ea;border-top-left-radius:3px;"></div>
<div style="position:absolute;left:614px;top:198.2px;width:172px;height:1.2px;background:#e3e4ea;"></div>
<div style="position:absolute;left:614px;top:235px;width:161px;height:1.2px;background:#e3e4ea;"></div>
<div style="position:absolute;left:777.8px;top:201.8px;width:6.4px;height:370px;background:#c2c2c4;border-radius:3px;"></div>
<div class="t" style="position:absolute;left:626.3px;top:212.02px;font-size:11.2px;font-weight:700;color:#1d2340;line-height:11.2px;-webkit-text-stroke:0.15px currentColor;white-space:nowrap;transform:scaleX(0.9232);transform-origin:0 0;">Filters</div>
<div style="position:absolute;left:626.3px;top:242.5px;width:135.6px;height:30.6px;background:#e3e6f6;border:1px solid #b9bcd6;border-radius:4px;"></div>
<div class="t" style="position:absolute;left:633.5px;top:252.99px;font-size:11px;font-weight:400;color:#2a2b33;line-height:11px;-webkit-text-stroke:0.3px currentColor;white-space:nowrap;transform:scaleX(0.9939);transform-origin:0 0;">Application</div>
<div class="t" style="position:absolute;left:737.4px;top:253.39px;font-size:11px;font-weight:400;color:#2a2b33;line-height:11px;-webkit-text-stroke:0.3px currentColor;white-space:nowrap;transform:scaleX(0.7673);transform-origin:0 0;">1</div>
<svg style="position:absolute;left:749.0999999999999px;top:252.3px;" width="7" height="11" viewBox="0 0 7 11"><path d="M5.2 1 L1 5.4 L5.2 9.8" fill="none" stroke="#1f9ba0" stroke-width="1.3" stroke-linecap="round" stroke-linejoin="round"/></svg>
<div style="position:absolute;left:626.3px;top:279.4px;width:135.6px;height:30.6px;background:#ffffff;border:1px solid #c5c6cc;border-radius:4px;"></div>
<div class="t" style="position:absolute;left:633.5px;top:289.89px;font-size:11px;font-weight:400;color:#2a2b33;line-height:11px;-webkit-text-stroke:0.3px currentColor;white-space:nowrap;transform:scaleX(0.9646);transform-origin:0 0;">Organism</div>
<svg style="position:absolute;left:749.0999999999999px;top:289.2px;" width="7" height="11" viewBox="0 0 7 11"><path d="M1 1 L5.2 5.4 L1 9.8" fill="none" stroke="#1f9ba0" stroke-width="1.3" stroke-linecap="round" stroke-linejoin="round"/></svg>
<div class="t" style="position:absolute;left:626.3px;top:336.18px;font-size:11.6px;font-weight:700;color:#1d2340;line-height:11.6px;-webkit-text-stroke:0.15px currentColor;white-space:nowrap;transform:scaleX(0.8645);transform-origin:0 0;">Figure Usage Data</div>
<svg style="position:absolute;left:721.3px;top:335.59999999999997px;" width="11.2" height="11.2" viewBox="0 0 11.2 11.2"><circle cx="5.6" cy="5.6" r="4.6" fill="none" stroke="#7d80a6" stroke-width="1"/><path d="M5.6 4.8 V8.0" stroke="#7d80a6" stroke-width="1"/><circle cx="5.6" cy="2.9999999999999996" r="0.6" fill="#7d80a6"/></svg>
<div style="position:absolute;left:748.8px;top:341px;width:11px;height:1.6px;background:#3aa3a6;"></div>
<div style="position:absolute;left:626.3px;top:360px;width:135.6px;height:30.6px;background:#ffffff;border:1px solid #c5c6cc;border-radius:4px;"></div>
<div class="t" style="position:absolute;left:633.5px;top:370.49px;font-size:11px;font-weight:400;color:#2a2b33;line-height:11px;-webkit-text-stroke:0.3px currentColor;white-space:nowrap;transform:scaleX(0.9220);transform-origin:0 0;">Tissue Used</div>
<div class="t" style="position:absolute;left:737.4px;top:370.89px;font-size:11px;font-weight:400;color:#2a2b33;line-height:11px;-webkit-text-stroke:0.3px currentColor;white-space:nowrap;transform:scaleX(0.7673);transform-origin:0 0;">1</div>
<svg style="position:absolute;left:749.0999999999999px;top:369.8px;" width="7" height="11" viewBox="0 0 7 11"><path d="M1 1 L5.2 5.4 L1 9.8" fill="none" stroke="#1f9ba0" stroke-width="1.3" stroke-linecap="round" stroke-linejoin="round"/></svg>
<div style="position:absolute;left:626.3px;top:397.2px;width:135.6px;height:30.6px;background:#ffffff;border:1px solid #c5c6cc;border-radius:4px;"></div>
<div class="t" style="position:absolute;left:633.5px;top:407.69px;font-size:11px;font-weight:400;color:#2a2b33;line-height:11px;-webkit-text-stroke:0.3px currentColor;white-space:nowrap;transform:scaleX(0.9275);transform-origin:0 0;">Cell Type Used</div>
<svg style="position:absolute;left:749.0999999999999px;top:407.0px;" width="7" height="11" viewBox="0 0 7 11"><path d="M1 1 L5.2 5.4 L1 9.8" fill="none" stroke="#1f9ba0" stroke-width="1.3" stroke-linecap="round" stroke-linejoin="round"/></svg>
<div style="position:absolute;left:626.3px;top:434.4px;width:135.6px;height:30.6px;background:#ffffff;border:1px solid #c5c6cc;border-radius:4px;"></div>
<div class="t" style="position:absolute;left:633.5px;top:444.89px;font-size:11px;font-weight:400;color:#2a2b33;line-height:11px;-webkit-text-stroke:0.3px currentColor;white-space:nowrap;transform:scaleX(0.8805);transform-origin:0 0;">Cell Line Used</div>
<svg style="position:absolute;left:749.0999999999999px;top:444.2px;" width="7" height="11" viewBox="0 0 7 11"><path d="M1 1 L5.2 5.4 L1 9.8" fill="none" stroke="#1f9ba0" stroke-width="1.3" stroke-linecap="round" stroke-linejoin="round"/></svg>
<div style="position:absolute;left:626.3px;top:471.7px;width:135.6px;height:30.6px;background:#ffffff;border:1px solid #c5c6cc;border-radius:4px;"></div>
<div class="t" style="position:absolute;left:633.5px;top:482.19px;font-size:11px;font-weight:400;color:#2a2b33;line-height:11px;-webkit-text-stroke:0.3px currentColor;white-space:nowrap;transform:scaleX(0.9233);transform-origin:0 0;">Disease</div>
<svg style="position:absolute;left:749.0999999999999px;top:481.5px;" width="7" height="11" viewBox="0 0 7 11"><path d="M1 1 L5.2 5.4 L1 9.8" fill="none" stroke="#1f9ba0" stroke-width="1.3" stroke-linecap="round" stroke-linejoin="round"/></svg>
<div class="t" style="position:absolute;left:626.3px;top:528.88px;font-size:11.6px;font-weight:700;color:#1d2340;line-height:11.6px;-webkit-text-stroke:0.15px currentColor;white-space:nowrap;transform:scaleX(0.8767);transform-origin:0 0;">Supplier Filters</div>
<div style="position:absolute;left:748.8px;top:533px;width:11px;height:1.6px;background:#3aa3a6;"></div>
<div style="position:absolute;left:626.3px;top:551.8px;width:135.6px;height:30.6px;background:#ffffff;border:1px solid #c5c6cc;border-radius:4px;"></div>
<div class="t" style="position:absolute;left:633.5px;top:562.29px;font-size:11px;font-weight:400;color:#2a2b33;line-height:11px;-webkit-text-stroke:0.3px currentColor;white-space:nowrap;transform:scaleX(1.0371);transform-origin:0 0;">Availability</div>
<svg style="position:absolute;left:749.0999999999999px;top:561.5999999999999px;" width="7" height="11" viewBox="0 0 7 11"><path d="M1 1 L5.2 5.4 L1 9.8" fill="none" stroke="#1f9ba0" stroke-width="1.3" stroke-linecap="round" stroke-linejoin="round"/></svg>
<div style="position:absolute;left:626.3px;top:589px;width:135.6px;height:30.6px;background:#ffffff;border:1px solid #c5c6cc;border-radius:4px;"></div>
<div class="t" style="position:absolute;left:633.5px;top:599.49px;font-size:11px;font-weight:400;color:#2a2b33;line-height:11px;-webkit-text-stroke:0.3px currentColor;white-space:nowrap;transform:scaleX(0.9707);transform-origin:0 0;">Company</div>
<svg style="position:absolute;left:749.0999999999999px;top:598.8px;" width="7" height="11" viewBox="0 0 7 11"><path d="M1 1 L5.2 5.4 L1 9.8" fill="none" stroke="#1f9ba0" stroke-width="1.3" stroke-linecap="round" stroke-linejoin="round"/></svg>
<div class="t" style="position:absolute;left:626.3px;top:645.98px;font-size:11.6px;font-weight:700;color:#1d2340;line-height:11.6px;-webkit-text-stroke:0.15px currentColor;white-space:nowrap;transform:scaleX(0.8502);transform-origin:0 0;">Antibody Specs</div>
<div style="position:absolute;left:748.8px;top:650px;width:11px;height:1.6px;background:#3aa3a6;"></div>
<div style="position:absolute;left:626.3px;top:669.7px;width:135.6px;height:30.6px;background:#ffffff;border:1px solid #c5c6cc;border-radius:4px;"></div>
<div class="t" style="position:absolute;left:633.5px;top:680.19px;font-size:11px;font-weight:400;color:#2a2b33;line-height:11px;-webkit-text-stroke:0.3px currentColor;white-space:nowrap;transform:scaleX(1.0221);transform-origin:0 0;">Verification</div>
<svg style="position:absolute;left:749.0999999999999px;top:679.5px;" width="7" height="11" viewBox="0 0 7 11"><path d="M1 1 L5.2 5.4 L1 9.8" fill="none" stroke="#1f9ba0" stroke-width="1.3" stroke-linecap="round" stroke-linejoin="round"/></svg>
<div style="position:absolute;left:626.3px;top:707px;width:135.6px;height:30.6px;background:#ffffff;border:1px solid #c5c6cc;border-radius:4px;"></div>
<div class="t" style="position:absolute;left:633.5px;top:717.49px;font-size:11px;font-weight:400;color:#2a2b33;line-height:11px;-webkit-text-stroke:0.3px currentColor;white-space:nowrap;transform:scaleX(1.0298);transform-origin:0 0;">Host</div>
<svg style="position:absolute;left:749.0999999999999px;top:716.8px;" width="7" height="11" viewBox="0 0 7 11"><path d="M1 1 L5.2 5.4 L1 9.8" fill="none" stroke="#1f9ba0" stroke-width="1.3" stroke-linecap="round" stroke-linejoin="round"/></svg>
<div style="position:absolute;left:626.3px;top:744.3px;width:135.6px;height:30.6px;background:#ffffff;border:1px solid #c5c6cc;border-radius:4px;"></div>
<div class="t" style="position:absolute;left:633.5px;top:754.79px;font-size:11px;font-weight:400;color:#2a2b33;line-height:11px;-webkit-text-stroke:0.3px currentColor;white-space:nowrap;transform:scaleX(0.9952);transform-origin:0 0;">Isotype</div>
<svg style="position:absolute;left:749.0999999999999px;top:754.0999999999999px;" width="7" height="11" viewBox="0 0 7 11"><path d="M1 1 L5.2 5.4 L1 9.8" fill="none" stroke="#1f9ba0" stroke-width="1.3" stroke-linecap="round" stroke-linejoin="round"/></svg>
<div style="position:absolute;left:793.5px;top:142.3px;width:520.5px;height:620.5px;background:#fff;border:1px solid #cfd0d8;box-shadow:0 1px 5px rgba(40,45,90,0.10);"></div>
<div class="t" style="position:absolute;left:807px;top:163.86px;font-size:13.4px;font-weight:700;color:#1c1f33;line-height:13.4px;-webkit-text-stroke:0.15px currentColor;white-space:nowrap;transform:scaleX(0.8669);transform-origin:0 0;">Application</div>
<svg style="position:absolute;left:1278.5px;top:163.5px;" width="14" height="14" viewBox="0 0 14 14"><path d="M1 1 L13 13 M13 1 L1 13" stroke="#4a4f95" stroke-width="1.4"/></svg>
<div class="t" style="position:absolute;left:807px;top:206.98px;font-size:11.6px;font-weight:700;color:#1c1f33;line-height:11.6px;-webkit-text-stroke:0.15px currentColor;white-space:nowrap;transform:scaleX(0.8692);transform-origin:0 0;">Applied Filters</div>
<div class="t" style="position:absolute;left:1239.7px;top:210.00px;font-size:9.8px;font-weight:700;color:#3f4a8a;line-height:9.8px;-webkit-text-stroke:0.15px currentColor;white-space:nowrap;transform:scaleX(0.8984);transform-origin:0 0;">Clear All (1)</div>
<div style="position:absolute;left:807px;top:234px;width:85.2px;height:19.7px;background:#e4e7f6;border-radius:3px;"></div>
<div class="t" style="position:absolute;left:812.6px;top:238.67px;font-size:10.2px;font-weight:400;color:#23283f;line-height:10.2px;-webkit-text-stroke:0.3px currentColor;white-space:nowrap;transform:scaleX(0.9313);transform-origin:0 0;">Western blot</div>
<svg style="position:absolute;left:875px;top:239.5px;" width="9" height="9" viewBox="0 0 9 9"><path d="M0.8 0.8 L8.2 8.2 M8.2 0.8 L0.8 8.2" stroke="#4a4e96" stroke-width="1.2"/></svg>
<div style="position:absolute;left:807px;top:269.6px;width:494px;height:31.2px;border:1px solid #c5c6cc;border-radius:3px;background:#fff;"></div>
<div class="t" style="position:absolute;left:817.6px;top:280.00px;font-size:13px;font-weight:400;color:#9a9ba3;line-height:13px;-webkit-text-stroke:0.3px currentColor;white-space:nowrap;transform:scaleX(0.9441);transform-origin:0 0;">Search for Application</div>
<svg style="position:absolute;left:1272px;top:277.5px;" width="18" height="17" viewBox="0 0 18 17"><circle cx="7.8" cy="7.6" r="6.6" fill="none" stroke="#6a6b74" stroke-width="1.3"/><path d="M12.6 12.4 L16 15.8" stroke="#6a6b74" stroke-width="1.4" stroke-linecap="round"/></svg>
<div style="position:absolute;left:1302px;top:312px;width:11px;height:450px;background:#f7f7f8;"></div>
<div style="position:absolute;left:1304.4px;top:315px;width:6.4px;height:395px;background:#c2c2c4;border-radius:3px;"></div>
<div class="t" style="position:absolute;left:806.9px;top:327.91px;font-size:11.8px;font-weight:700;color:#1c1f33;line-height:11.8px;-webkit-text-stroke:0.15px currentColor;white-space:nowrap;transform:scaleX(0.8743);transform-origin:0 0;">Name</div>
<svg style="position:absolute;left:843.5px;top:327px;" width="10" height="12" viewBox="0 0 10 12"><path d="M5 1 V10.5 M1.5 7 L5 10.5 L8.5 7" fill="none" stroke="#a4a7cf" stroke-width="1"/></svg>
<div class="t" style="position:absolute;left:1060.5px;top:327.81px;font-size:11.8px;font-weight:700;color:#1c1f33;line-height:11.8px;-webkit-text-stroke:0.15px currentColor;white-space:nowrap;transform:scaleX(0.8428);transform-origin:0 0;">Products</div>
<svg style="position:absolute;left:1112px;top:327px;" width="10" height="12" viewBox="0 0 10 12"><path d="M5 1 V10.5 M1.5 7 L5 10.5 L8.5 7" fill="none" stroke="#5d63a8" stroke-width="1.1"/></svg>
<div class="t" style="position:absolute;left:1152.2px;top:327.81px;font-size:11.8px;font-weight:700;color:#1c1f33;line-height:11.8px;-webkit-text-stroke:0.15px currentColor;white-space:nowrap;transform:scaleX(0.8528);transform-origin:0 0;">With Published Figures</div>
<svg style="position:absolute;left:1273px;top:327px;" width="10" height="12" viewBox="0 0 10 12"><path d="M5 1 V10.5 M1.5 7 L5 10.5 L8.5 7" fill="none" stroke="#b4b7d8" stroke-width="1"/></svg>
<div class="t" style="position:absolute;left:807px;top:369.38px;font-size:11.6px;font-weight:400;color:#25262e;line-height:11.6px;-webkit-text-stroke:0.3px currentColor;white-space:nowrap;transform:scaleX(0.9424);transform-origin:0 0;">Immunohistochemistry</div>
<div class="n" style="position:absolute;left:893.2px;width:400px;text-align:center;top:369.38px;font-size:11.6px;font-weight:400;color:#25262e;line-height:11.6px;-webkit-text-stroke:0.12px currentColor;white-space:nowrap;">51</div>
<div class="n" style="position:absolute;left:1020.5999999999999px;width:400px;text-align:center;top:369.38px;font-size:11.6px;font-weight:400;color:#25262e;line-height:11.6px;-webkit-text-stroke:0.12px currentColor;white-space:nowrap;">14</div>
<div style="position:absolute;left:794.5px;top:395px;width:507.5px;height:1px;background:#dcdce1;"></div>
<div class="t" style="position:absolute;left:807px;top:411.03px;font-size:11.6px;font-weight:400;color:#25262e;line-height:11.6px;-webkit-text-stroke:0.3px currentColor;white-space:nowrap;transform:scaleX(0.9199);transform-origin:0 0;">Immunofluorescence</div>
<div class="n" style="position:absolute;left:893.2px;width:400px;text-align:center;top:411.03px;font-size:11.6px;font-weight:400;color:#25262e;line-height:11.6px;-webkit-text-stroke:0.12px currentColor;white-space:nowrap;">36</div>
<div class="n" style="position:absolute;left:1020.5999999999999px;width:400px;text-align:center;top:411.03px;font-size:11.6px;font-weight:400;color:#25262e;line-height:11.6px;-webkit-text-stroke:0.12px currentColor;white-space:nowrap;">5</div>
<div style="position:absolute;left:794.5px;top:437px;width:507.5px;height:1px;background:#dcdce1;"></div>
<div class="t" style="position:absolute;left:807px;top:452.68px;font-size:11.6px;font-weight:400;color:#25262e;line-height:11.6px;-webkit-text-stroke:0.3px currentColor;white-space:nowrap;transform:scaleX(0.9521);transform-origin:0 0;">Immunoprecipitation</div>
<div class="n" style="position:absolute;left:893.2px;width:400px;text-align:center;top:452.68px;font-size:11.6px;font-weight:400;color:#25262e;line-height:11.6px;-webkit-text-stroke:0.12px currentColor;white-space:nowrap;">35</div>
<div class="n" style="position:absolute;left:1020.5999999999999px;width:400px;text-align:center;top:452.68px;font-size:11.6px;font-weight:400;color:#25262e;line-height:11.6px;-webkit-text-stroke:0.12px currentColor;white-space:nowrap;">0</div>
<div style="position:absolute;left:794.5px;top:479px;width:507.5px;height:1px;background:#dcdce1;"></div>
<div class="t" style="position:absolute;left:807px;top:494.33px;font-size:11.6px;font-weight:400;color:#25262e;line-height:11.6px;-webkit-text-stroke:0.3px currentColor;white-space:nowrap;transform:scaleX(0.9537);transform-origin:0 0;">Flow Cytometry</div>
<div class="n" style="position:absolute;left:893.2px;width:400px;text-align:center;top:494.33px;font-size:11.6px;font-weight:400;color:#25262e;line-height:11.6px;-webkit-text-stroke:0.12px currentColor;white-space:nowrap;">24</div>
<div class="n" style="position:absolute;left:1020.5999999999999px;width:400px;text-align:center;top:494.33px;font-size:11.6px;font-weight:400;color:#25262e;line-height:11.6px;-webkit-text-stroke:0.12px currentColor;white-space:nowrap;">1</div>
<div style="position:absolute;left:794.5px;top:520px;width:507.5px;height:1px;background:#dcdce1;"></div>
<div class="t" style="position:absolute;left:807px;top:535.98px;font-size:11.6px;font-weight:400;color:#25262e;line-height:11.6px;-webkit-text-stroke:0.3px currentColor;white-space:nowrap;transform:scaleX(0.9490);transform-origin:0 0;">Immunocytochemistry</div>
<div class="n" style="position:absolute;left:893.2px;width:400px;text-align:center;top:535.98px;font-size:11.6px;font-weight:400;color:#25262e;line-height:11.6px;-webkit-text-stroke:0.12px currentColor;white-space:nowrap;">22</div>
<div class="n" style="position:absolute;left:1020.5999999999999px;width:400px;text-align:center;top:535.98px;font-size:11.6px;font-weight:400;color:#25262e;line-height:11.6px;-webkit-text-stroke:0.12px currentColor;white-space:nowrap;">0</div>
<div style="position:absolute;left:794.5px;top:562px;width:507.5px;height:1px;background:#dcdce1;"></div>
<div class="t" style="position:absolute;left:807px;top:577.63px;font-size:11.6px;font-weight:400;color:#25262e;line-height:11.6px;-webkit-text-stroke:0.3px currentColor;white-space:nowrap;transform:scaleX(0.9384);transform-origin:0 0;">Immunostaining</div>
<div class="n" style="position:absolute;left:893.2px;width:400px;text-align:center;top:577.63px;font-size:11.6px;font-weight:400;color:#25262e;line-height:11.6px;-webkit-text-stroke:0.12px currentColor;white-space:nowrap;">9</div>
<div class="n" style="position:absolute;left:1020.5999999999999px;width:400px;text-align:center;top:577.63px;font-size:11.6px;font-weight:400;color:#25262e;line-height:11.6px;-webkit-text-stroke:0.12px currentColor;white-space:nowrap;">9</div>
<div style="position:absolute;left:794.5px;top:604px;width:507.5px;height:1px;background:#dcdce1;"></div>
<div class="t" style="position:absolute;left:807px;top:619.28px;font-size:11.6px;font-weight:400;color:#25262e;line-height:11.6px;-webkit-text-stroke:0.3px currentColor;white-space:nowrap;transform:scaleX(0.8517);transform-origin:0 0;">ELISA</div>
<div class="n" style="position:absolute;left:893.2px;width:400px;text-align:center;top:619.28px;font-size:11.6px;font-weight:400;color:#25262e;line-height:11.6px;-webkit-text-stroke:0.12px currentColor;white-space:nowrap;">8</div>
<div class="n" style="position:absolute;left:1020.5999999999999px;width:400px;text-align:center;top:619.28px;font-size:11.6px;font-weight:400;color:#25262e;line-height:11.6px;-webkit-text-stroke:0.12px currentColor;white-space:nowrap;">0</div>
<div style="position:absolute;left:794.5px;top:645px;width:507.5px;height:1px;background:#dcdce1;"></div>
<div class="t" style="position:absolute;left:807px;top:660.93px;font-size:11.6px;font-weight:400;color:#25262e;line-height:11.6px;-webkit-text-stroke:0.3px currentColor;white-space:nowrap;transform:scaleX(0.9232);transform-origin:0 0;">Proximity Ligation Assay</div>
<div class="n" style="position:absolute;left:893.2px;width:400px;text-align:center;top:660.93px;font-size:11.6px;font-weight:400;color:#25262e;line-height:11.6px;-webkit-text-stroke:0.12px currentColor;white-space:nowrap;">5</div>
<div class="n" style="position:absolute;left:1020.5999999999999px;width:400px;text-align:center;top:660.93px;font-size:11.6px;font-weight:400;color:#25262e;line-height:11.6px;-webkit-text-stroke:0.12px currentColor;white-space:nowrap;">0</div>
<div style="position:absolute;left:794.5px;top:687px;width:507.5px;height:1px;background:#dcdce1;"></div>
<div class="t" style="position:absolute;left:807px;top:702.98px;font-size:11.6px;font-weight:400;color:#25262e;line-height:11.6px;-webkit-text-stroke:0.3px currentColor;white-space:nowrap;transform:scaleX(0.9424);transform-origin:0 0;">Immunohistochemistry</div>
<div class="t" style="position:absolute;left:807px;top:719.38px;font-size:11.6px;font-weight:400;color:#25262e;line-height:11.6px;-webkit-text-stroke:0.3px currentColor;white-space:nowrap;transform:scaleX(0.9084);transform-origin:0 0;">(Paraffin Embedded)</div>
<div class="n" style="position:absolute;left:893.2px;width:400px;text-align:center;top:711.18px;font-size:11.6px;font-weight:400;color:#25262e;line-height:11.6px;-webkit-text-stroke:0.12px currentColor;white-space:nowrap;">2</div>
<div class="n" style="position:absolute;left:1020.5999999999999px;width:400px;text-align:center;top:711.18px;font-size:11.6px;font-weight:400;color:#25262e;line-height:11.6px;-webkit-text-stroke:0.12px currentColor;white-space:nowrap;">2</div>
<div style="position:absolute;left:794.5px;top:745px;width:507.5px;height:1px;background:#dcdce1;"></div>
</body></html>
